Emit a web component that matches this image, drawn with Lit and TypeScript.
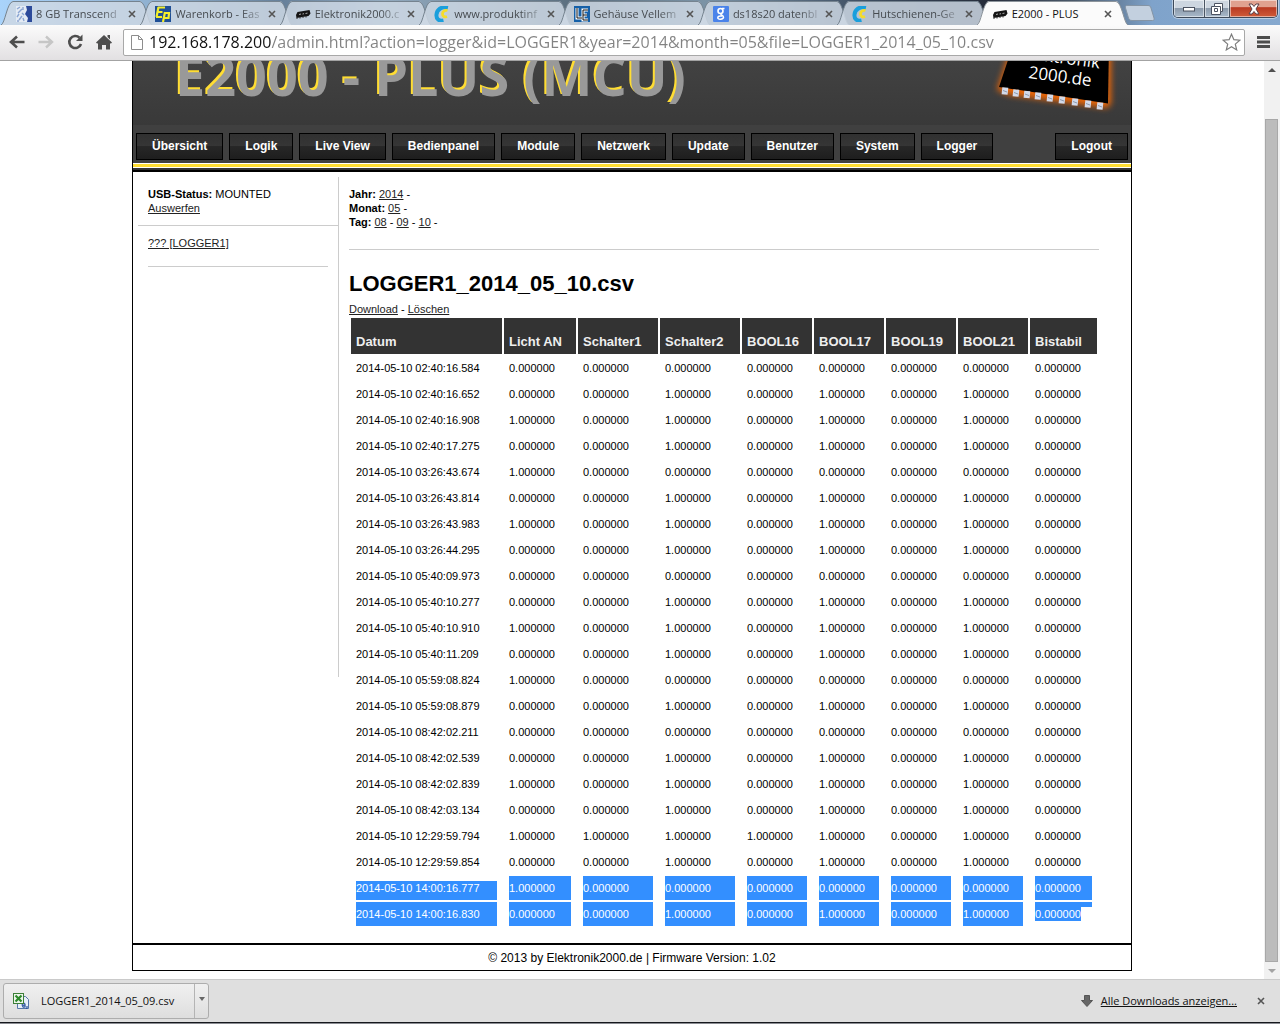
import { LitElement, html, css, svg } from "lit";
import { customElement } from "lit/decorators.js";
import { classMap } from "lit/directives/class-map.js";

const iconTranscend = svg`<rect width="16" height="16" fill="#e4ebf4"/><path d="M1 3l3-2M2 7l4-4M1 11l2-3M3 14l3-4M7 1v3M6 7l2 2M7 12l1 3M1 15h2" fill="none" stroke="#8aa5d2" stroke-width="1.400"/><path d="M10 0h6v16h-5l1-4-3-4 2-4z" fill="#2c4a9a"/>`;
const iconEasy = svg`<rect width="16" height="16" fill="#1f4f96"/><path d="M3 1.500h7M2.500 6h5M1 11h6M3.500 1L1.500 11" fill="none" stroke="#f4ee2c" stroke-width="2.200"/><path d="M10 6L8 16M10 7h4l-.5 5H9.500" fill="none" stroke="#f4ee2c" stroke-width="2.200"/>`;
const iconChip = svg`<path d="M2.500 6L14.500 4l1 3.500L13.500 10l-12 2L1 9z" fill="#151515"/><path d="M2 11.500V13M5 11v1.500M8 10.500V12M11 10v1.500" stroke="#333" stroke-width="1"/><path d="M4 8.500l2-.5M7.500 8l1.500-.3M10.500 7.500l2-.4" stroke="#aaa" stroke-width="1"/>`;
const iconConrad = svg`<path d="M14 1.500C7 0 3 4 2.500 8.500S5 15.500 9.500 14.500" fill="none" stroke="#1a9fdc" stroke-width="4"/><path d="M13.500 4.500c-3-.8-5 1-5 3.500s2 3.500 4.500 2.500" fill="none" stroke="#f5dc2a" stroke-width="2.800"/>`;
const iconElectro = svg`<rect width="16" height="16" fill="#1560a8"/><path d="M3 2v10h5M14 4H9v10h5M9 9h4" fill="none" stroke="#fff" stroke-width="3"/><path d="M3 2v10h5M14 4H9v10h5M9 9h4" fill="none" stroke="#111" stroke-width="1"/>`;
const iconSearch = svg`<rect width="16" height="16" rx="1" fill="#4a83ea"/><circle cx="7.500" cy="5" r="2.500" fill="none" stroke="#fff" stroke-width="1.600"/><path d="M9 2.500h2.500M8 7.500c-1 1.500 2.500 1.500 2.500 3.700S4.500 14 4.800 11.700 8 10 9 10" fill="none" stroke="#fff" stroke-width="1.500"/>`;

const TABS = [
  { title: "8 GB Transcend", icon: iconTranscend },
  { title: "Warenkorb - Eas", icon: iconEasy },
  { title: "Elektronik2000.c", icon: iconChip },
  { title: "www.produktinf", icon: iconConrad },
  { title: "Gehäuse Vellem", icon: iconElectro },
  { title: "ds18s20 datenbl", icon: iconSearch },
  { title: "Hutschienen-Ge", icon: iconConrad },
  { title: "E2000 - PLUS", icon: iconChip, active: true },
];

const MENU = ["Übersicht", "Logik", "Live View", "Bedienpanel", "Module", "Netzwerk", "Update", "Benutzer", "System", "Logger"];

const COLUMNS = ["Datum", "Licht AN", "Schalter1", "Schalter2", "BOOL16", "BOOL17", "BOOL19", "BOOL21", "Bistabil"];

const ROWS: [string, string][] = [
  ["02:40:16.584", "00000000"],
  ["02:40:16.652", "00101010"],
  ["02:40:16.908", "10101010"],
  ["02:40:17.275", "00101010"],
  ["03:26:43.674", "10000000"],
  ["03:26:43.814", "00101010"],
  ["03:26:43.983", "10101010"],
  ["03:26:44.295", "00101010"],
  ["05:40:09.973", "00000000"],
  ["05:40:10.277", "00101010"],
  ["05:40:10.910", "10101010"],
  ["05:40:11.209", "00101010"],
  ["05:59:08.824", "10000000"],
  ["05:59:08.879", "00101010"],
  ["08:42:02.211", "00000000"],
  ["08:42:02.539", "00101010"],
  ["08:42:02.839", "10101010"],
  ["08:42:03.134", "00101010"],
  ["12:29:59.794", "11111010"],
  ["12:29:59.854", "00101010"],
  ["14:00:16.777", "10000000"],
  ["14:00:16.830", "00101010"],
];
const FIRST_SELECTED = 20;

const cross = html`<svg class="cross" viewBox="0 0 8 8" width="8" height="8" aria-hidden="true"><path d="M1 1l6 6M7 1L1 7" stroke="currentColor" stroke-width="1.600" fill="none"/></svg>`;

@customElement("browser-tabs")
export class BrowserTabs extends LitElement {
  static styles = css`
    :host {
      display: flex;
      height: 25px;
      padding: 0 2px 0 1px;
      overflow: hidden;
      font: 11px/16px "Open Sans", "Noto Sans", sans-serif;
      background: linear-gradient(90deg, #a9d3fb 0, #8fb0cf 12%, #66809a 22%, #93abc0 30%, #5a6d7d 45%, #7b93a6 55%, #3c4c60 68%, #262d3b 77%, #4b5a6b 84%, #7fa3cb 90%, #86a9cf 100%);
    }
    .tabs { display: flex; flex: 1; min-width: 0; }
    .tab {
      display: flex;
      flex: 1 1 0;
      min-width: 0;
      margin: 1px 0 0 -12px;
      color: #464b50;
      --fill: #cdd8e4d8;
      --edge: #75838f;
    }
    .tab:first-child { margin-left: 0; }
    .active { color: #111; --fill: #fbfbfb; --edge: #8c949b; position: relative; }
    .slope { flex: none; display: block; }
    .slope .body { fill: var(--fill); }
    .slope .line { fill: none; stroke: var(--edge); }
    .inner {
      flex: 1;
      min-width: 0;
      display: flex;
      align-items: center;
      background: var(--fill);
      border-top: 1px solid var(--edge);
      padding: 0 0 0 3px;
      gap: 4px;
    }
    .favicon { flex: none; }
    button { border: 0; padding: 0; margin: 0; background: none; color: inherit; font: inherit; }
    .title {
      flex: 1;
      min-width: 0;
      overflow: hidden;
      white-space: nowrap;
      text-align: left;
      -webkit-mask-image: linear-gradient(90deg, #000 78%, #0004);
      mask-image: linear-gradient(90deg, #000 78%, #0004);
    }
    .active .title { -webkit-mask-image: none; mask-image: none; }
    .close { flex: none; width: 16px; height: 16px; display: grid; place-items: center; color: #555; }
    .fresh { flex: none; width: 31px; height: 16px; margin: 5px 18px 0 -4px; display: block; }
    .controls {
      flex: none;
      display: flex;
      height: 17px;
      border: 1px solid #3e4a5a;
      border-top: 0;
      border-radius: 0 0 5px 5px;
      overflow: hidden;
      box-shadow: 0 0 0 1px #ffffff70;
    }
    .controls button { display: grid; place-items: center; border-right: 1px solid #4a5563; background: linear-gradient(#cdd6e0 0 45%, #8997a8 45%, #a9bacb); box-shadow: inset 0 0 0 1px #ffffff80; }
    .min { width: 31px; }
    .max { width: 25px; }
    .controls .quit { width: 47px; border-right: 0; background: linear-gradient(#e0a18f 0 40%, #b93a22 45%, #cf5b39); }
  `;
  render() {
    return html`
      <nav class="tabs" aria-label="Tabs">
        ${TABS.map((t) => html`
          <div class=${classMap({ tab: true, active: !!t.active })}>
            <svg class="slope" width="12" height="24" viewBox="0 0 12 24" aria-hidden="true"><path class="body" d="M0 24C3 24 7 0 12 0V24z"/><path class="line" d="M0 24C4 23 6 1 12 .5"/></svg>
            <div class="inner">
              <svg class="favicon" width="16" height="16" viewBox="0 0 16 16" aria-hidden="true">${t.icon}</svg>
              <button class="title">${t.title}</button>
              <button class="close" aria-label="Tab schließen">${cross}</button>
            </div>
            <svg class="slope" width="12" height="24" viewBox="0 0 12 24" aria-hidden="true"><path class="body" d="M0 0C5 0 9 24 12 24H0z"/><path class="line" d="M0 .5C6 1 8 23 12 24"/></svg>
          </div>`)}
      </nav>
      <button class="fresh" aria-label="Neuer Tab"><svg width="31" height="16" viewBox="0 0 31 16"><path d="M3 .5h21c2 0 2.500 1 3 2.500l3 10c.5 1.500 0 2.500-1.500 2.500H8c-2 0-3-1-3.500-2.500l-3-10C1 1.500 1.500.5 3 .5z" fill="#c3d0df" stroke="#8494a5"/></svg></button>
      <div class="controls">
        <button class="min" aria-label="Minimieren"><svg width="14" height="6" viewBox="0 0 14 6"><rect x="1.500" y="1.500" width="11" height="3.500" fill="#fff" stroke="#4b5260"/></svg></button>
        <button class="max" aria-label="Wiederherstellen"><svg width="12" height="12" viewBox="0 0 12 12"><path d="M3.500.5h8v8h-2v3h-9v-8h3z" fill="#fff" stroke="#4b5260"/><path d="M9.500 8.500v-5h-6M3.500 5.500h3v3h-3z" fill="none" stroke="#4b5260"/></svg></button>
        <button class="quit" aria-label="Schließen"><svg width="14" height="12" viewBox="0 0 14 12"><path d="M2 1h3l2 2.500L9 1h3L9 6l3 5H9L7 8.500 5 11H2l3-5z" fill="#fff" stroke="#5b4048"/></svg></button>
      </div>`;
  }
}

@customElement("browser-toolbar")
export class BrowserToolbar extends LitElement {
  static styles = css`
    :host {
      display: flex;
      align-items: center;
      box-sizing: border-box;
      height: 36px;
      padding: 0 8px 1px;
      background: linear-gradient(#fbfbfb, #e2e0e2);
      border-bottom: 1px solid #a3a3a3;
    }
    button { border: 0; padding: 0; margin: 0; background: none; display: grid; place-items: center; }
    .actions { display: flex; gap: 11px; padding-right: 10px; }
    .actions button { width: 18px; height: 18px; }
    .field {
      flex: 1;
      display: flex;
      align-items: center;
      box-sizing: border-box;
      height: 27px;
      border: 1px solid #a8a8a8;
      border-radius: 2px;
      background: #fff;
      padding: 0 3px 0 7px;
      gap: 6px;
    }
    input {
      flex: 1;
      min-width: 0;
      border: 0;
      padding: 0;
      outline: 0;
      font: 16px/22px "Open Sans", "Noto Sans", sans-serif;
      color: transparent;
      background: linear-gradient(90deg, #111 122px, #828282 122px);
      -webkit-background-clip: text;
      background-clip: text;
    }
    .menu { width: 14px; margin: 0 1px 0 12px; }
  `;
  render() {
    return html`
      <div class="actions">
        <button aria-label="Zurück"><svg width="18" height="18" viewBox="0 0 18 18"><path d="M16.500 9H4M9 3.500L3 9l6 5.500" fill="none" stroke="#4e4e4e" stroke-width="2.600"/></svg></button>
        <button aria-label="Vorwärts"><svg width="18" height="18" viewBox="0 0 18 18"><path d="M1.500 9H14M9 3.500L15 9l-6 5.500" fill="none" stroke="#c6c6c6" stroke-width="2.400"/></svg></button>
        <button aria-label="Neu laden"><svg width="18" height="18" viewBox="0 0 18 18"><path d="M13.500 4.700A6 6 0 1 0 15 11" fill="none" stroke="#4e4e4e" stroke-width="2.600"/><path d="M16.500 1.500V8H10z" fill="#4e4e4e"/></svg></button>
        <button aria-label="Startseite"><svg width="18" height="18" viewBox="0 0 18 18"><path d="M9 2l8 7.500-1.200 1.200L15 10v6.500h-4V12H7v4.500H3V10l-.8.700L1 9.500z" fill="#4e4e4e"/><path d="M12.500 2H15v4.500L12.500 4z" fill="#4e4e4e"/></svg></button>
      </div>
      <div class="field">
        <svg width="12" height="15" viewBox="0 0 12 15" aria-hidden="true"><path d="M.5.5h7l4 4v10H.5z" fill="#fff" stroke="#8d8d8d"/><path d="M7.500.5v4h4" fill="none" stroke="#8d8d8d"/></svg>
        <input type="text" aria-label="Adresse" value="192.168.178.200/admin.html?action=logger&id=LOGGER1&year=2014&month=05&file=LOGGER1_2014_05_10.csv" />
        <button aria-label="Lesezeichen"><svg width="19" height="18" viewBox="0 0 19 18"><path d="M9.500 1.200l2.400 5.500 5.900.5-4.500 3.900 1.400 5.800-5.200-3.100-5.200 3.100 1.400-5.800L1.200 7.200l5.900-.5z" fill="#fff" stroke="#7c7c7c" stroke-width="1.200"/></svg></button>
      </div>
      <button class="menu" aria-label="Menü"><svg width="14" height="14" viewBox="0 0 14 14"><path d="M0 2.500h13M0 7h13M0 11.500h13" stroke="#4c4c4c" stroke-width="3"/></svg></button>`;
  }
}

@customElement("log-table")
export class LogTable extends LitElement {
  static styles = css`
    :host { display: block; }
    table { width: 100%; table-layout: fixed; border-collapse: separate; border-spacing: 2px; color: #000; }
    .date { width: 151px; }
    .light { width: 72px; }
    .switch { width: 80px; }
    .flag { width: 70px; }
    th { padding: 16px 5px 4px; background: #333; color: #eee; font-size: 13px; line-height: 16px; text-align: left; white-space: nowrap; }
    td { padding: 0 5px; font-size: 11px; line-height: 14px; white-space: nowrap; }
    .value { padding: 5px 0; }
    .marked { background: #338fff; color: #fff; }
    .start { background: linear-gradient(transparent 5px, #338fff 5px); }
    .end { background: linear-gradient(#338fff 5px, transparent 5px); }
    .end .run { background: #338fff; display: inline-block; vertical-align: top; }
  `;
  private cell(text: string, row: number, col: number) {
    const marked = row >= FIRST_SELECTED;
    const start = row === FIRST_SELECTED && col === 0;
    const end = row === ROWS.length - 1 && col === COLUMNS.length - 1;
    return html`<td><div class=${classMap({ value: true, marked, start, end })}><span class="run">${text}</span></div></td>`;
  }
  render() {
    return html`
      <table>
        <colgroup>
          <col class="date" /><col class="light" /><col class="switch" /><col class="switch" />
          <col class="flag" /><col class="flag" /><col class="flag" /><col class="flag" /><col />
        </colgroup>
        <thead><tr>${COLUMNS.map((c) => html`<th scope="col">${c}</th>`)}</tr></thead>
        <tbody>
          ${ROWS.map(([time, bits], r) => html`<tr>
            ${this.cell(`2014-05-10 ${time}`, r, 0)}
            ${[...bits].map((b, i) => this.cell(`${b}.000000`, r, i + 1))}
          </tr>`)}
        </tbody>
      </table>`;
  }
}

@customElement("admin-page")
export class AdminPage extends LitElement {
  static styles = css`
    :host { display: block; flex: 1; min-width: 0; background: #fff; font: 11px/14px "Liberation Sans", Arial, sans-serif; color: #000; }
    .frame { box-sizing: border-box; max-width: 1000px; margin: 0 auto 8px; border: 1px solid #000; border-top: 0; }
    .banner { display: flex; justify-content: space-between; align-items: flex-end; height: 64px; overflow: hidden; padding: 0 1px 0 42px; background: linear-gradient(#424242, #393939); }
    h1 { margin: 0; padding-bottom: 18px; font: bold 54px/64px "Open Sans", "Noto Sans", sans-serif; color: #999; text-shadow: -2px -2px #fd3; white-space: nowrap; }
    .logo { flex: none; display: block; }
    .logo text { font: 17px "Open Sans", "Noto Sans", sans-serif; fill: #fff; }
    .menu { display: flex; gap: 6px; padding: 8px 3px 3px; background: #404040; }
    .menu a {
      box-sizing: border-box;
      height: 27px;
      padding: 0 15px;
      border: 1px solid #000;
      background: linear-gradient(#303030, #363636 50%, #272727 50%, #1e1e1e);
      color: #fff;
      font-size: 12px;
      line-height: 24px;
      font-weight: bold;
      text-decoration: none;
      white-space: nowrap;
    }
    .menu .logout { margin-left: auto; }
    .stripe { height: 3px; background: #fd3; border: solid #fff; border-width: 1px 0; }
    .content { display: flex; align-items: flex-start; border-top: 2px solid #000; box-shadow: 0 -2px #333; margin-top: 2px; }
    .side { flex: none; width: 200px; min-height: 500px; margin: 5px 0 0 5px; border-right: 1px solid #ccc; }
    .block { padding: 10px; }
    .usb { border-bottom: 1px solid #ccc; }
    a { color: #222; }
    .side hr { margin: 16px 0 0; }
    hr { border: 0; border-top: 1px solid #ccc; margin: 20px 0; }
    .log { flex: 1; min-width: 0; padding: 15px 32px 15px 10px; }
    h2 { margin: 0; font-size: 22px; line-height: 28px; padding-bottom: 4px; }
    footer { border-top: 2px solid #000; padding: 6px 0 5px; text-align: center; font-size: 12px; }
  `;
  render() {
    const pins = [[1005, 90.5], [1016, 92.5], [1027, 94], [1038, 95.5], [1050, 97.5], [1062, 99.5], [1075, 101.5], [1088, 103.5], [1100, 105.5]];
    return html`
      <div class="frame">
        <header class="banner">
          <h1>E2000 - PLUS (MCU)</h1>
          <svg class="logo" width="150" height="64" viewBox="980 61 150 64" role="img" aria-label="Elektronik 2000.de">
            <defs><filter id="glow" x="-20%" y="-20%" width="140%" height="150%"><feGaussianBlur stdDeviation="3"/></filter></defs>
            <path d="M1012 45L997 90l12 5 98 13 4-4V45z" fill="#ff6a00" opacity=".9" filter="url(#glow)"/>
            <path d="M1013 45L999 87l109 16.500 1-58z" fill="#000"/>
            ${pins.map(([x, y]) => svg`<rect x=${x - 3} y=${y - 3} width="6" height="7" fill="#d3daea" transform=${`rotate(6 ${x} ${y})`}/><path d=${`M${x - 2} ${y}l4 1.500`} fill="none" stroke="#8f99ab" stroke-width="1"/>`)}
            <text transform="translate(1021 58) rotate(7.500)">Elektronik</text>
            <text transform="translate(1028 78) rotate(7.500)">2000.de</text>
          </svg>
        </header>
        <nav class="menu" aria-label="Hauptmenü">
          ${MENU.map((m) => html`<a href="#">${m}</a>`)}
          <a class="logout" href="#">Logout</a>
        </nav>
        <div class="stripe"></div>
        <div class="content">
          <aside class="side">
            <div class="block usb"><b>USB-Status:</b> MOUNTED<br /><a href="#">Auswerfen</a></div>
            <div class="block"><a href="#">??? [LOGGER1]</a><hr /></div>
          </aside>
          <main class="log">
            <div><b>Jahr:</b> <a href="#">2014</a> -</div>
            <div><b>Monat:</b> <a href="#">05</a> -</div>
            <div><b>Tag:</b> <a href="#">08</a> - <a href="#">09</a> - <a href="#">10</a> -</div>
            <hr />
            <h2>LOGGER1_2014_05_10.csv</h2>
            <div><a href="#">Download</a> - <a href="#">Löschen</a></div>
            <log-table></log-table>
          </main>
        </div>
        <footer>© 2013 by Elektronik2000.de | Firmware Version: 1.02</footer>
      </div>`;
  }
}

@customElement("page-scrollbar")
export class PageScrollbar extends LitElement {
  static styles = css`
    :host { display: flex; flex-direction: column; flex: none; width: 16px; background: #f1f1f1; }
    button { border: 0; padding: 0; background: none; height: 17px; display: grid; place-items: center; }
    .thumb { flex: 1; margin: 41px 2px 0 1px; background: #bcbcbc; border: 1px solid #a8a8a8; }
  `;
  render() {
    return html`
      <button aria-label="Nach oben"><svg width="8" height="4" viewBox="0 0 8 4"><path d="M0 4l4-4 4 4z" fill="#505050"/></svg></button>
      <div class="thumb"></div>
      <button aria-label="Nach unten"><svg width="8" height="4" viewBox="0 0 8 4"><path d="M0 0l4 4 4-4z" fill="#a3a3a3"/></svg></button>`;
  }
}

@customElement("download-shelf")
export class DownloadShelf extends LitElement {
  static styles = css`
    :host {
      display: flex;
      align-items: center;
      box-sizing: border-box;
      height: 45px;
      padding: 0 15px 3px 3px;
      background: #dfdfdf;
      border-top: 1px solid #cacaca;
      box-shadow: inset 0 -1px #8a8c92, inset 0 -2px #15171c;
      font: 11px/16px "Open Sans", "Noto Sans", sans-serif;
      color: #111;
    }
    button { border: 0; margin: 0; background: none; color: inherit; font: inherit; }
    .item { display: flex; height: 34px; border: 1px solid #adadad; border-radius: 3px; background: linear-gradient(#f0f0f0, #dedede); margin-right: auto; }
    .file { display: flex; align-items: center; gap: 12px; padding: 0 20px 0 9px; border-right: 1px solid #b4b4b4; }
    .more { width: 13px; padding: 0 0 4px; display: grid; place-items: center; }
    .all { color: #111; margin: 0 20px 0 8px; }
    .close { padding: 0; width: 8px; height: 16px; display: grid; place-items: center; color: #555; }
  `;
  render() {
    return html`
      <div class="item">
        <button class="file">
          <svg width="16" height="16" viewBox="0 0 16 16" aria-hidden="true"><path d="M4.500 3.500h8l3 3v9h-11z" fill="#e9f0fa" stroke="#5676a8"/><path d="M9 12.500c0-3 3-3 3-1v3M12 12c-3-.5-3 3-.5 2M14 13v2l-1 1" fill="none" stroke="#2d559f" stroke-width="1.200"/><rect x=".5" y=".5" width="10" height="10" fill="#eef6ec" stroke="#3d7f38"/><path d="M2.500 2.500l6 6M8.500 2.500l-6 6" stroke="#2d8a2b" stroke-width="2.200"/></svg>
          <span>LOGGER1_2014_05_09.csv</span>
        </button>
        <button class="more" aria-label="Optionen"><svg width="6" height="4" viewBox="0 0 6 4"><path d="M0 0h6L3 4z" fill="#666"/></svg></button>
      </div>
      <svg width="12" height="12" viewBox="0 0 12 12" aria-hidden="true"><path d="M3.500.5h5v5h3L6 11.500.5 5.500h3z" fill="#666" stroke="#555"/></svg>
      <a class="all" href="#">Alle Downloads anzeigen...</a>
      <button class="close" aria-label="Leiste schließen">${cross}</button>`;
  }
}

@customElement("app-root")
export class AppRoot extends LitElement {
  static styles = css`
    :host { display: flex; flex-direction: column; min-height: 100vh; background: #fff; }
    .viewport { flex: 1; display: flex; }
  `;
  render() {
    return html`
      <browser-tabs></browser-tabs>
      <browser-toolbar></browser-toolbar>
      <div class="viewport"><admin-page></admin-page><page-scrollbar></page-scrollbar></div>
      <download-shelf></download-shelf>`;
  }
}
